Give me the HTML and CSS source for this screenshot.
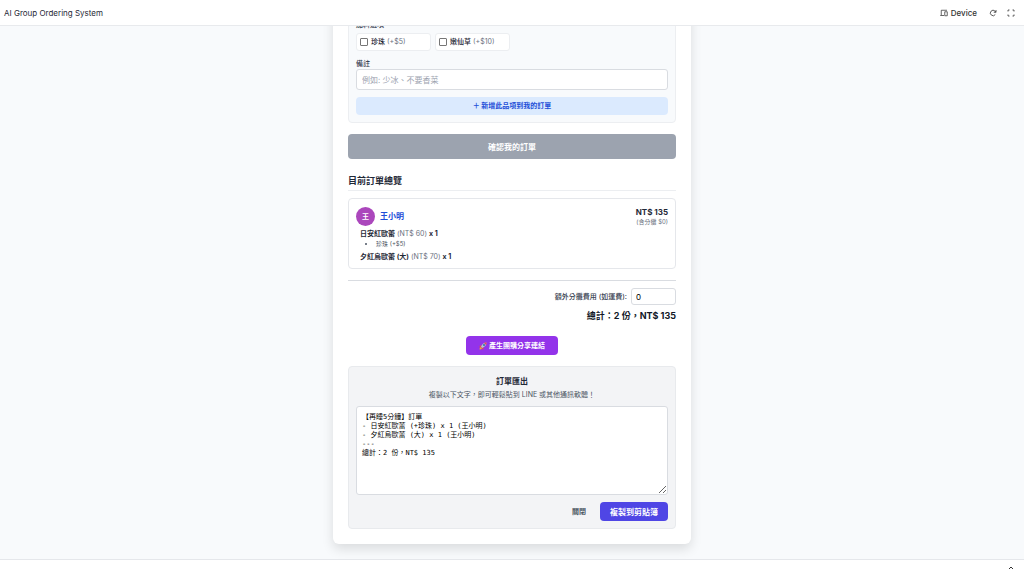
FILE: index.html
```html
<!DOCTYPE html>
<html lang="zh-Hant">
<head>
  <meta charset="UTF-8" />
  <meta name="viewport" content="width=device-width, initial-scale=1.0"/>
  <title>AI Group Ordering System</title>
  <link rel="stylesheet" href="styles.css">
</head>
<body>
  <header class="topbar">
    <span class="topbar-title">AI Group Ordering System</span>
    <div class="topbar-actions">
      <button type="button" class="tool-btn device-btn">
        <svg width="8" height="8" viewBox="0 0 16 16" fill="none" stroke="currentColor" stroke-width="1.5">
          <path d="M14 2.5H2.5V12M0.5 13H8M9.5 5.5h5v8h-5z"/>
        </svg>
        Device
      </button>
      <button type="button" class="tool-btn" aria-label="Reload">
        <svg width="8" height="8" viewBox="0 0 16 16" fill="none" stroke="currentColor" stroke-width="1.6">
          <path d="M12.6 11A5.4 5.4 0 1 1 12 4.2L14 6.2M14 2v4.5H9.5"/>
        </svg>
      </button>
      <button type="button" class="tool-btn" aria-label="Fullscreen">
        <svg width="8" height="8" viewBox="0 0 16 16" fill="none" stroke="currentColor" stroke-width="1.6">
          <path d="M2 5V2h3M11 2h3v3M14 11v3h-3M5 14H2v-3"/>
        </svg>
      </button>
    </div>
  </header>

  <main class="viewport">
    <div class="card">
      <!-- Item form -->
      <section class="item-form">
        <p class="group-label">加料選項</p>
        <div class="toppings">
          <label class="topping"><input type="checkbox"><b>珍珠</b> <span>(+$5)</span></label>
          <label class="topping"><input type="checkbox"><b>嫩仙草</b> <span>(+$10)</span></label>
        </div>
        <label class="field-label" for="note">備註</label>
        <input type="text" id="note" class="note" placeholder="例如: 少冰、不要香菜">
        <button type="button" class="btn btn-add">＋ 新增此品項到我的訂單</button>
      </section>

      <button type="button" class="btn btn-confirm">確認我的訂單</button>

      <!-- Orders -->
      <h2>目前訂單總覽</h2>
      <section class="order">
        <div class="order-head">
          <span class="avatar">王</span>
          <h3>王小明</h3>
          <div class="order-price">
            <strong>NT$ 135</strong>
            <small>(含分攤 $0)</small>
          </div>
        </div>
        <div class="order-items">
          <p><b>日安紅歐蕾</b> <span>(NT$ 60)</span> <b>x 1</b></p>
          <ul>
            <li>珍珠 (+$5)</li>
          </ul>
          <p><b>夕紅烏歐蕾 (大)</b> <span>(NT$ 70)</span> <b>x 1</b></p>
        </div>
      </section>

      <section class="totals">
        <div class="fee-row">
          <label for="fee">額外分攤費用 (如運費):</label>
          <input type="text" id="fee" inputmode="numeric" value="0">
        </div>
        <p class="total">總計：2 份，NT$ 135</p>
      </section>

      <button type="button" class="btn btn-share">
        <svg width="8" height="8" viewBox="0 0 16 16">
          <path d="M5 6L1 8v3l4-1zM10 11l-2 4H6l0-4z" fill="#e0445a"/>
          <path d="M15 1C10 1 7 4 4 9l3 3C12 9 15 6 15 1z" fill="#b8c5d0"/>
          <path d="M15 1c-2 0-4 0-5 1l4 4C15 5 15 3 15 1z" fill="#e0445a"/>
          <circle cx="10" cy="6" r="2" fill="#2c6fa8"/>
          <path d="M4 10c-2 1-3 3-3 5 2 0 4-1 5-3z" fill="#f9a825"/>
        </svg>
        產生團購分享連結
      </button>

      <!-- Export -->
      <section class="export">
        <h4>訂單匯出</h4>
        <label for="export-text">複製以下文字，即可輕鬆貼到 LINE 或其他通訊軟體！</label>
        <textarea id="export-text" readonly>【再睡5分鐘】訂單
- 日安紅歐蕾 (+珍珠) x 1 (王小明)
- 夕紅烏歐蕾 (大) x 1 (王小明)
---
總計：2 份，NT$ 135</textarea>
        <div class="export-actions">
          <button type="button" class="btn btn-close">關閉</button>
          <button type="button" class="btn btn-copy">複製到剪貼簿</button>
        </div>
      </section>
    </div>
  </main>

  <footer class="bottombar">
    <button type="button" class="tool-btn" aria-label="Expand">
      <svg width="8" height="8" viewBox="0 0 16 16" fill="none" stroke="currentColor" stroke-width="2">
        <path d="M4 10L8 6l4 4"/>
      </svg>
    </button>
  </footer>
</body>
</html>
```

FILE: styles.css
```css
* {
  box-sizing: border-box;
}
body {
  margin: 0;
  height: 100vh;
  display: flex;
  flex-direction: column;
  font-family: Inter, "Noto Sans CJK TC", sans-serif;
  font-size: 7px;
  line-height: 10px;
  color: #1f2937;
  background: #fff;
}
h2, h3, h4, p, ul {
  margin: 0;
}
button, input, textarea {
  font: inherit;
  color: inherit;
}

/* Top and bottom bars */
.topbar {
  flex: none;
  height: 26px;
  padding: 0 9px 0 4px;
  display: flex;
  align-items: center;
  justify-content: space-between;
  border-bottom: 1px solid #e8eaed;
}
.topbar-title {
  font-size: 8px;
}
.topbar-actions {
  display: flex;
  align-items: center;
  gap: 10px;
}
.tool-btn {
  display: flex;
  align-items: center;
  gap: 3px;
  padding: 0;
  border: none;
  background: none;
  color: #333;
  cursor: pointer;
}
.device-btn {
  font-size: 8px;
  font-weight: 500;
  margin-right: 2px;
}
.bottombar {
  flex: none;
  height: 17px;
  padding: 4px 9px;
  display: flex;
  justify-content: flex-end;
  border-top: 1px solid #e5e7eb;
}

/* Page card */
.viewport {
  flex: 1;
  min-height: 0;
  overflow: hidden;
  display: flex;
  flex-direction: column;
  justify-content: flex-end;
  align-items: center;
  padding: 0 15px 15px;
  background: #f8fafc;
}
.card {
  flex: none;
  width: 100%;
  max-width: 358px;
  padding: 15px;
  display: flex;
  flex-direction: column;
  background: #fff;
  border-radius: 6px;
  box-shadow: 0 5px 12px rgba(0, 0, 0, 0.12);
}
.btn {
  padding: 0;
  border: none;
  border-radius: 4px;
  font-weight: 700;
  cursor: pointer;
}

/* Item form */
.item-form {
  padding: 7px;
  background: #f8fafc;
  border: 1px solid #eceef1;
  border-radius: 4px;
}
.group-label,
.field-label {
  display: block;
  font-weight: 500;
  color: #374151;
}
.group-label {
  margin-bottom: 3px;
}
.toppings {
  display: grid;
  grid-template-columns: repeat(4, 1fr);
  gap: 4px;
  margin-bottom: 8px;
}
.topping {
  display: flex;
  align-items: center;
  gap: 2px;
  height: 18px;
  padding: 0 3px;
  background: #fff;
  border: 1px solid #eceef1;
  border-radius: 3px;
}
.topping input {
  appearance: none;
  width: 8px;
  height: 8px;
  margin: 0 1px 0 0;
  border: 1px solid #767676;
  border-radius: 1px;
  background: #fff;
}
.topping b {
  font-weight: 500;
}
.topping span {
  color: #6b7280;
}
.note {
  display: block;
  width: 100%;
  height: 21px;
  padding: 0 5px;
  font-size: 8px;
  background: #fff;
  border: 1px solid #d9dce1;
  border-radius: 3px;
}
.note::placeholder {
  color: #9ca3af;
}
.btn-add {
  display: block;
  width: 100%;
  height: 18px;
  margin-top: 7px;
  color: #1d4ed8;
  background: #dbeafe;
}
.btn-confirm {
  height: 25px;
  margin-top: 11px;
  font-size: 8px;
  color: #fff;
  background: #9ca3af;
}

/* Orders */
h2 {
  margin: 15px 0 7px;
  padding-bottom: 2px;
  font-size: 9px;
  line-height: 14px;
  border-bottom: 1px solid #eceef1;
}
.order {
  padding: 7px 7px 6px;
  border: 1px solid #e5e7eb;
  border-radius: 4px;
}
.order-head {
  display: flex;
  align-items: center;
  gap: 5px;
}
.avatar {
  width: 19px;
  height: 19px;
  line-height: 19px;
  text-align: center;
  font-weight: 700;
  color: #fff;
  background: #ab47bc;
  border-radius: 50%;
}
h3 {
  font-size: 8px;
  color: #1d4ed8;
}
.order-price {
  margin-left: auto;
  text-align: right;
}
.order-price strong {
  display: block;
  font-size: 8px;
  line-height: 12px;
}
.order-price small {
  display: block;
  font-size: 6px;
  line-height: 8px;
  color: #6b7280;
}
.order-items {
  margin-top: 3px;
  padding-left: 4px;
}
.order-items span {
  color: #6b7280;
}
.order-items ul {
  padding-left: 16px;
  margin: 0 0 3px;
  font-size: 6px;
  color: #4b5563;
}

/* Totals */
.totals {
  margin-top: 11px;
  padding-top: 7px;
  text-align: right;
  border-top: 1px solid #d9dce1;
}
.fee-row {
  display: flex;
  align-items: center;
  justify-content: flex-end;
  gap: 4px;
  font-weight: 500;
  color: #374151;
}
.fee-row input {
  width: 45px;
  height: 17px;
  padding: 0 4px;
  font-size: 8px;
  font-weight: 400;
  color: #000;
  border: 1px solid #d9dce1;
  border-radius: 3px;
}
.total {
  margin-top: 4px;
  font-size: 9px;
  line-height: 13px;
  font-weight: 700;
  color: #111827;
}
.btn-share {
  align-self: center;
  display: flex;
  align-items: center;
  gap: 2px;
  height: 19px;
  margin-top: 14px;
  padding: 0 13px;
  color: #fff;
  background: #9333ea;
}

/* Export */
.export {
  margin-top: 11px;
  padding: 7px;
  text-align: center;
  background: #f3f4f6;
  border: 1px solid #e8eaed;
  border-radius: 4px;
}
h4 {
  font-size: 8px;
  line-height: 15px;
}
.export label {
  display: block;
  margin-bottom: 6px;
  line-height: 11px;
  color: #4b5563;
}
.export textarea {
  display: block;
  width: 100%;
  height: 89px;
  padding: 6px 5px;
  font-family: "DejaVu Sans Mono", "Noto Sans CJK TC", monospace;
  font-size: 7px;
  line-height: 9px;
  color: #000;
  background: #fff;
  border: 1px solid #d9dce1;
  border-radius: 3px;
}
.export-actions {
  display: flex;
  justify-content: flex-end;
  gap: 7px;
  margin-top: 7px;
}
.btn-close,
.btn-copy {
  height: 19px;
  padding: 0 10px;
}
.btn-close {
  padding: 0 7px;
  color: #4b5563;
  background: none;
}
.btn-copy {
  font-size: 8px;
  color: #fff;
  background: #4f46e5;
}
```
